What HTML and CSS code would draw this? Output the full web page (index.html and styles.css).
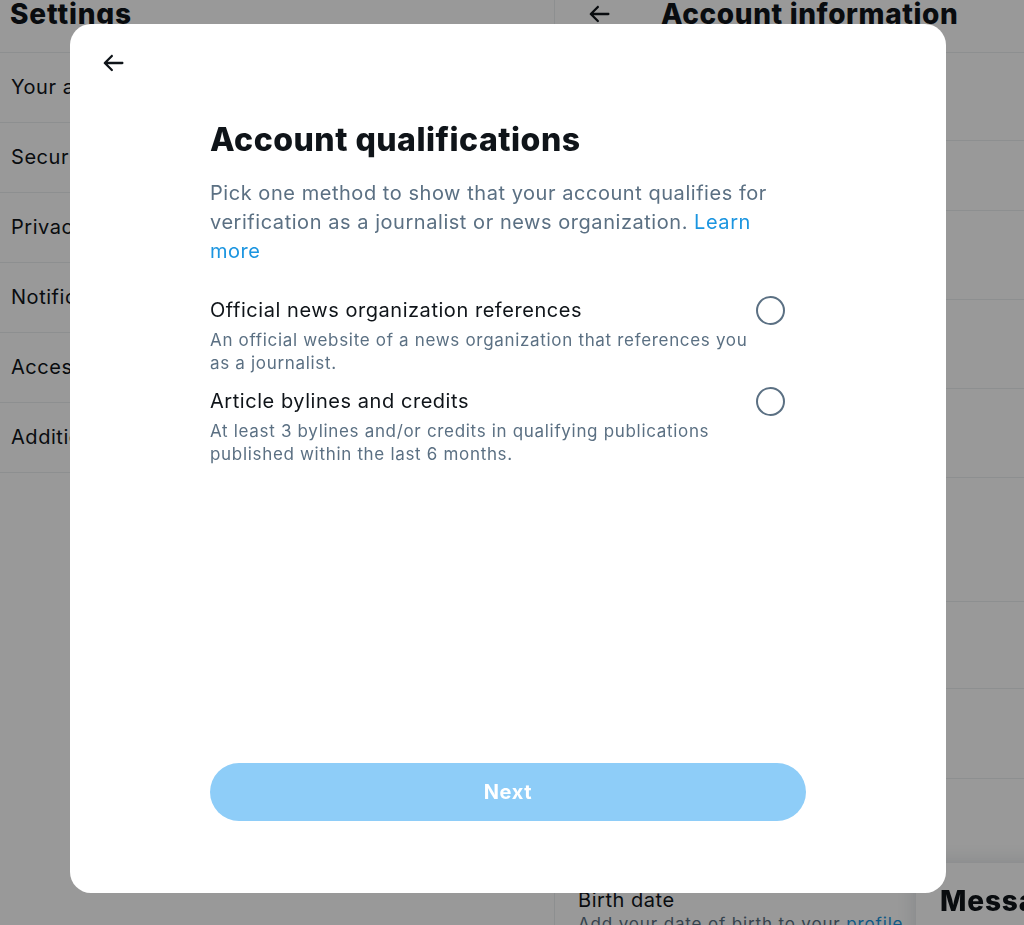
FILE: index.html
```html
<!DOCTYPE html>
<html>
<head>
	<title>Account qualifications</title>
	<link rel="stylesheet" href="styles.css">
</head>
<body>
	<div class="app">
		<section class="settings">
			<header class="col-head">
				<h2>Settings</h2>
			</header>
			<ul class="menu">
				<li>Your account</li>
				<li>Security and account access</li>
				<li>Privacy and safety</li>
				<li>Notifications</li>
				<li>Accessibility, display, and languages</li>
				<li>Additional resources</li>
			</ul>
		</section>

		<section class="detail">
			<header class="col-head detail-head">
				<svg class="icon" viewBox="0 0 24 24"><path d="M20 11H7.414l4.293-4.293c.39-.39.39-1.023 0-1.414s-1.023-.39-1.414 0l-6 6c-.39.39-.39 1.023 0 1.414l6 6c.195.195.45.293.707.293s.512-.098.707-.293c.39-.39.39-1.023 0-1.414L7.414 13H20c.553 0 1-.447 1-1s-.447-1-1-1z"></path></svg>
				<h2>Account information</h2>
			</header>
			<div class="row row-a">Username</div>
			<div class="row row-sm">Phone</div>
			<div class="row row-md">Email</div>
			<div class="row row-md">Verified</div>
			<div class="row row-md">Protected Tweets</div>
			<div class="row row-lg">Account creation</div>
			<div class="row row-b">Country</div>
			<div class="row row-c">Languages</div>
			<div class="row row-a">Gender</div>
			<div class="row">
				<div class="row-title">Birth date</div>
				<div class="row-sub">Add your date of birth to your <a href="#">profile</a>.</div>
			</div>
		</section>
	</div>

	<aside class="drawer">
		<h2>Messages</h2>
	</aside>

	<div class="overlay">
		<div class="modal">
			<div class="modal-head">
				<svg class="icon back" viewBox="0 0 24 24"><path d="M20 11H7.414l4.293-4.293c.39-.39.39-1.023 0-1.414s-1.023-.39-1.414 0l-6 6c-.39.39-.39 1.023 0 1.414l6 6c.195.195.45.293.707.293s.512-.098.707-.293c.39-.39.39-1.023 0-1.414L7.414 13H20c.553 0 1-.447 1-1s-.447-1-1-1z"></path></svg>
			</div>

			<div class="modal-body">
				<h1>Account qualifications</h1>
				<p class="lead">Pick one method to show that your account qualifies for verification as a journalist or news organization. <a href="#">Learn more</a></p>

				<div class="options">
					<label class="option">
						<div class="option-text">
							<div class="option-title">Official news organization references</div>
							<div class="option-desc">An official website of a news organization that references you as a journalist.</div>
						</div>
						<span class="radio"></span>
					</label>
					<label class="option">
						<div class="option-text">
							<div class="option-title">Article bylines and credits</div>
							<div class="option-desc">At least 3 bylines and/or credits in qualifying publications published within the last 6 months.</div>
						</div>
						<span class="radio"></span>
					</label>
				</div>
			</div>

			<div class="modal-foot">
				<button class="next" disabled>Next</button>
			</div>
		</div>
	</div>
</body>
</html>
```

FILE: styles.css
```css
body {
	margin: 0;
	background: #fff;
	color: #0f1419;
	font-family: Inter, "Noto Sans", sans-serif;
	letter-spacing: 0.034em;
	overflow: hidden;
}

a {
	color: #1b95e0;
	text-decoration: none;
}

.app {
	display: flex;
	height: 925px;
	overflow: hidden;
}

.icon {
	width: 28px;
	height: 28px;
	fill: #0f1419;
	flex: none;
}

/* page under the dialog */

.settings {
	width: 554px;
	border-right: solid 1px #ebeef0;
	flex: none;
}

.col-head {
	height: 52px;
	border-bottom: solid 1px #ebeef0;
	display: flex;
	align-items: flex-start;
}

.col-head h2 {
	margin: -2px 0 0 10px;
	font-size: 28px;
	line-height: 32px;
	font-weight: 800;
	letter-spacing: 0.03em;
	white-space: nowrap;
}

.menu {
	list-style: none;
	margin: 0;
	padding: 0;
}

.menu li {
	height: 69px;
	line-height: 69px;
	padding-left: 11px;
	font-size: 20px;
	border-bottom: solid 1px #ebeef0;
	white-space: nowrap;
}

.detail {
	flex: 1;
	min-width: 0;
}

.detail-head .icon {
	margin: 0 0 0 30px;
}

.detail-head h2 {
	margin-left: 48px;
	letter-spacing: 0.022em;
}

.row {
	padding: 20px 23px;
	border-bottom: solid 1px #ebeef0;
	font-size: 20px;
	box-sizing: border-box;
}

.row-sm { height: 70px; }
.row-a { height: 88px; }
.row-b { height: 87px; }
.row-md { height: 89px; }
.row-c { height: 90px; }
.row-lg { height: 124px; }

.row-title {
	font-size: 20px;
	line-height: 26px;
}

.row-sub {
	font-size: 17px;
	line-height: 23px;
	letter-spacing: 0.05em;
	color: #5b7083;
	white-space: nowrap;
}

.drawer {
	position: fixed;
	left: 916px;
	top: 863px;
	width: 530px;
	height: 100px;
	background: #fff;
	border-radius: 21px 21px 0 0;
	box-shadow: 0 0 20px rgba(101,119,134,0.25);
}

.drawer h2 {
	margin: 22px 0 0 24px;
	font-size: 28px;
	line-height: 32px;
	font-weight: 800;
	letter-spacing: 0.03em;
}

/* dialog */

.overlay {
	position: fixed;
	top: 0;
	left: 0;
	right: 0;
	bottom: 0;
	background: rgba(0,0,0,0.4);
	display: flex;
	align-items: center;
	justify-content: center;
	padding: 0 8px 8px 0;
}

.modal {
	width: 876px;
	height: 869px;
	background: #fff;
	border-radius: 21px;
	display: flex;
	flex-direction: column;
}

.modal-head {
	padding: 25px 0 0 29px;
	height: 28px;
}

.modal-body {
	flex: 1;
	padding: 0 140px;
}

.modal-body h1 {
	margin: 45px 0 0;
	font-size: 32px;
	line-height: 36px;
	font-weight: 800;
	letter-spacing: 0.5px;
}

.lead {
	margin: 21px 0 0;
	font-size: 20px;
	line-height: 29px;
	color: #5b7083;
}

.options {
	margin-top: 31px;
}

.option {
	display: flex;
	align-items: flex-start;
	padding-right: 21px;
}

.option + .option {
	margin-top: 13px;
}

.option-text {
	flex: 1;
}

.option-title {
	font-size: 20px;
	line-height: 26px;
}

.option-desc {
	margin-top: 6px;
	font-size: 17px;
	line-height: 23px;
	letter-spacing: 0.04em;
	color: #5b7083;
}

.radio {
	width: 25px;
	height: 25px;
	border: solid 2px #5b7083;
	border-radius: 50%;
	flex: none;
	margin-top: -1px;
}

.modal-foot {
	padding: 0 140px 72px;
}

.next {
	width: 100%;
	height: 58px;
	border: none;
	border-radius: 29px;
	background: #8ecdf8;
	color: #fff;
	font-family: Inter, "Noto Sans", sans-serif;
	font-size: 20px;
	font-weight: 700;
	letter-spacing: 0.034em;
}
```
